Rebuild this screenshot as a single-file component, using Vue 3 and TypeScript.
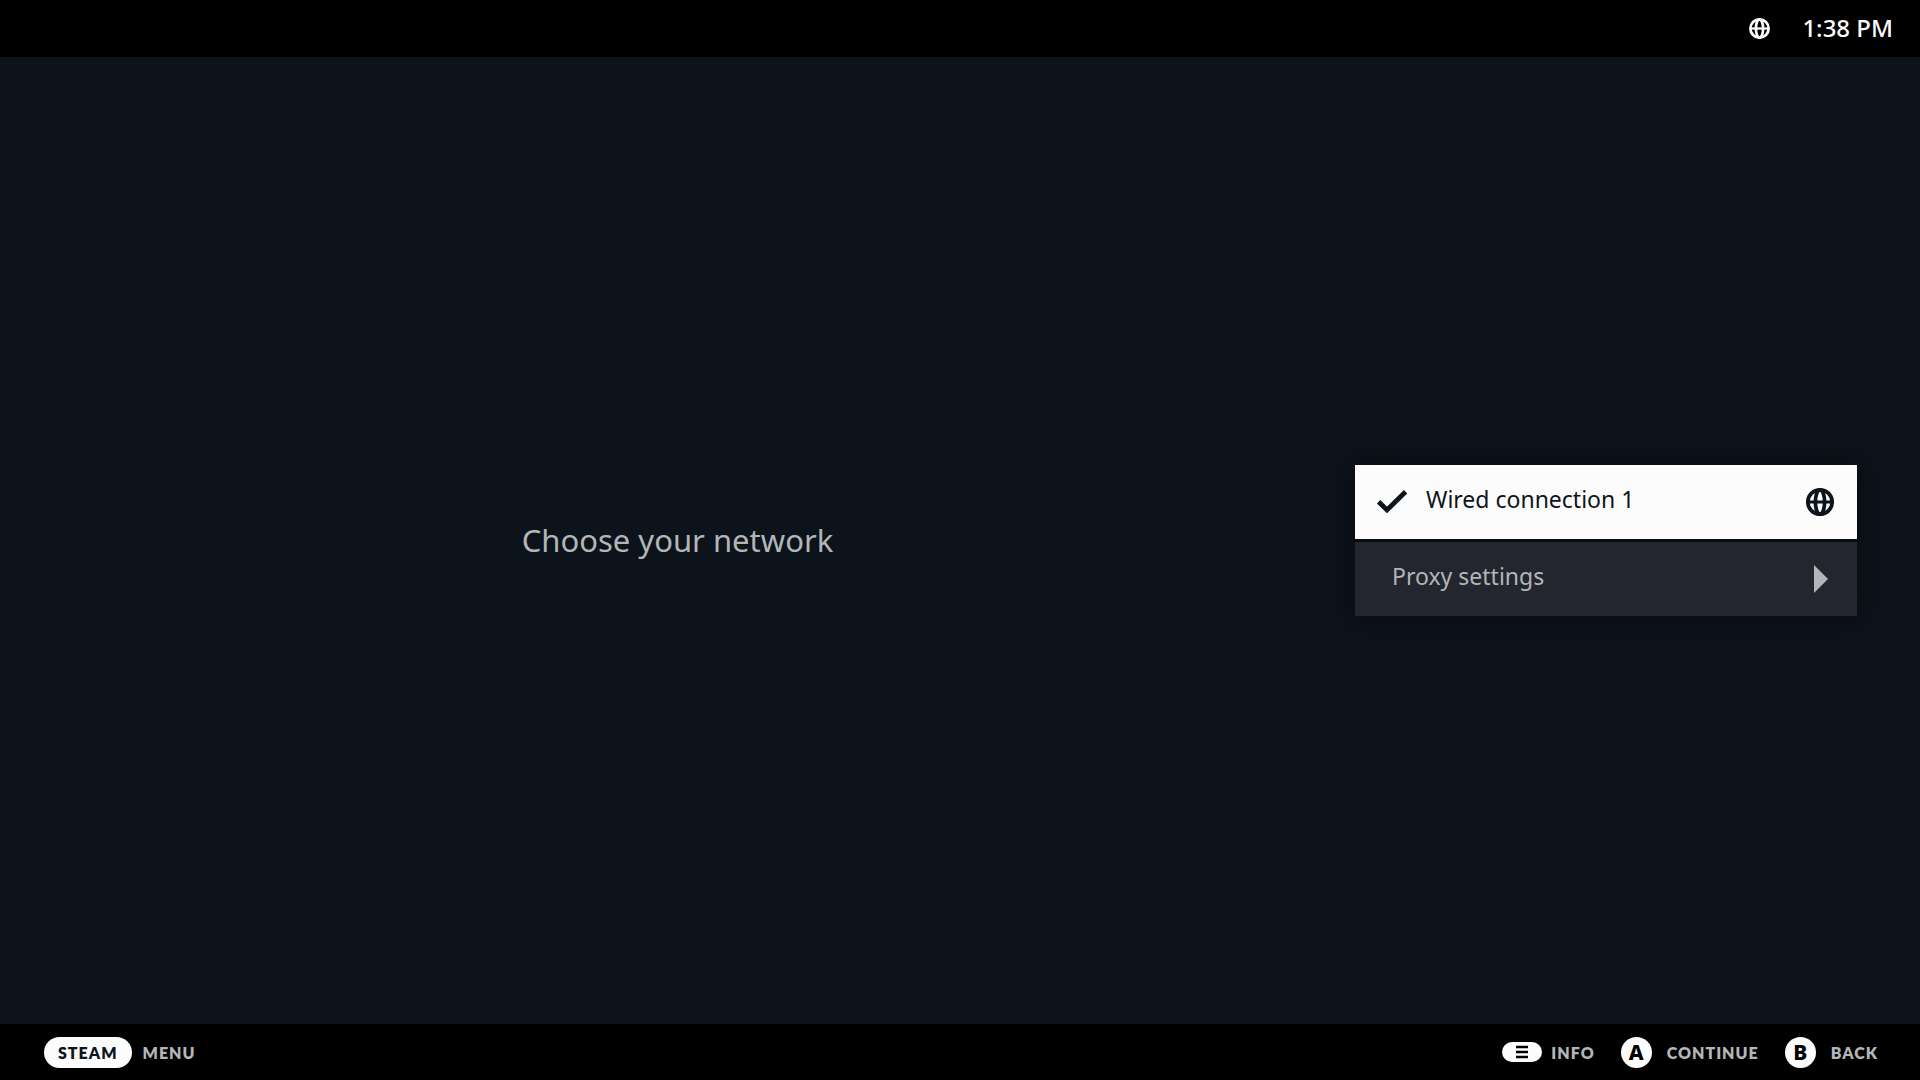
<script setup lang="ts">
import { ref } from 'vue'

const clock = ref('1:38 PM')
const networks = ref([{ id: 1, name: 'Wired connection 1', connected: true }])
</script>

<template>
  <div class="screen">
    <header class="status">
      <svg class="status-globe" viewBox="0 0 28 28" fill="none" stroke="currentColor" stroke-width="3.6" role="img" aria-label="Network connected">
        <circle cx="14" cy="14" r="12.2" />
        <ellipse cx="14" cy="14" rx="4.8" ry="12.2" />
        <path d="M1.5 14h25" stroke-width="3" />
      </svg>
      <time class="clock">{{ clock }}</time>
    </header>

    <main class="setup">
      <h1 class="title">Choose your network</h1>
      <div class="menu">
        <button v-for="network in networks" :key="network.id" type="button" class="item focused">
          <svg v-if="network.connected" class="check" viewBox="0 0 32 24" aria-hidden="true">
            <path d="M2.6 11.8 11 20 29.6 1.8" fill="none" stroke="currentColor" stroke-width="4.8" />
          </svg>
          <span class="label">{{ network.name }}</span>
          <svg class="globe" viewBox="0 0 28 28" fill="none" stroke="currentColor" stroke-width="3.7" aria-hidden="true">
            <circle cx="14" cy="14" r="12.2" />
            <ellipse cx="14" cy="14" rx="4.6" ry="12.2" />
            <path d="M1.5 14h25" stroke-width="3" />
          </svg>
        </button>
        <button type="button" class="item proxy">
          <span class="label">Proxy settings</span>
          <svg class="arrow" viewBox="0 0 14 28" aria-hidden="true">
            <path d="M0 0 14 14 0 28z" fill="currentColor" />
          </svg>
        </button>
      </div>
    </main>

    <footer class="hints">
      <button type="button" class="hint steam">
        <span class="pill">STEAM</span>
        <span class="hint-text">MENU</span>
      </button>
      <div class="actions">
        <button type="button" class="hint info">
          <svg class="menu-glyph" viewBox="0 0 40 20" aria-hidden="true">
            <rect width="40" height="20" rx="10" fill="#fcfcfc" />
            <path d="M14 5h12M14 10h12M14 15h12" stroke="#000" stroke-width="2.4" />
          </svg>
          <span class="hint-text">INFO</span>
        </button>
        <button type="button" class="hint">
          <span class="round">A</span>
          <span class="hint-text">CONTINUE</span>
        </button>
        <button type="button" class="hint">
          <span class="round">B</span>
          <span class="hint-text">BACK</span>
        </button>
      </div>
    </footer>
  </div>
</template>

<style>
body {
  margin: 0;
  background: #0c131a;
}
</style>

<style scoped>
.screen {
  display: flex;
  flex-direction: column;
  min-height: 100vh;
  background: #0c131a;
  font-family: "Noto Sans", sans-serif;
}

button {
  margin: 0;
  padding: 0;
  border: 0;
  background: none;
  font: inherit;
  color: inherit;
  cursor: pointer;
}

.status {
  display: flex;
  align-items: center;
  justify-content: flex-end;
  gap: 32px;
  height: 57px;
  padding-right: 27px;
  background: #000;
  color: #fcfcfc;
}

.status-globe {
  width: 21px;
  height: 21px;
}

.clock {
  padding-bottom: 2px;
  font-size: 24px;
  line-height: 32px;
  font-weight: 500;
}

.setup {
  display: flex;
  flex: 1;
  align-items: center;
  padding-right: 63px;
}

.title {
  flex: 1;
  margin: 0;
  padding-bottom: 2px;
  text-align: center;
  font-size: 31px;
  line-height: 44px;
  font-weight: 400;
  color: #b2b6b8;
}

.menu {
  display: flex;
  flex-direction: column;
  gap: 3px;
  width: 502px;
  background: #060c0f;
  box-shadow: 0 0 24px rgba(10, 10, 15, 0.9);
}

.item {
  display: flex;
  align-items: center;
  height: 74px;
  padding: 0 23px 0 21px;
  background: #23262e;
  color: #b2b6b8;
  font-size: 23px;
  line-height: 32px;
  text-align: left;
}

.focused {
  background: #fcfcfc;
  color: #0d141b;
}

.proxy {
  padding: 0 29px 0 37px;
}

.label {
  flex: 1;
  padding-bottom: 6px;
}

.check {
  width: 32px;
  height: 24px;
  margin-right: 18px;
}

.globe {
  width: 28px;
  height: 28px;
}

.arrow {
  width: 14px;
  height: 28px;
}

.hints {
  display: flex;
  align-items: center;
  justify-content: space-between;
  height: 56px;
  padding: 0 42px 0 44px;
  background: #000;
  color: #b2b6b8;
  font-family: Lato, sans-serif;
  font-size: 16px;
  line-height: 24px;
  font-weight: 800;
  letter-spacing: 1px;
}

.actions {
  display: flex;
  gap: 26px;
}

.hint {
  display: flex;
  align-items: center;
  gap: 15px;
  letter-spacing: inherit;
}

.steam {
  gap: 11px;
}

.info {
  gap: 9px;
}

.hint-text {
  padding-top: 2px;
}

.pill {
  padding: 0 14px;
  border-radius: 16px;
  background: #fcfcfc;
  color: #0d141b;
  line-height: 31px;
}

.menu-glyph {
  width: 40px;
  height: 20px;
}

.round {
  width: 31px;
  border-radius: 50%;
  background: #fcfcfc;
  color: #000;
  font-family: "Noto Sans", sans-serif;
  font-size: 21px;
  line-height: 31px;
  letter-spacing: 0;
  text-align: center;
}
</style>
